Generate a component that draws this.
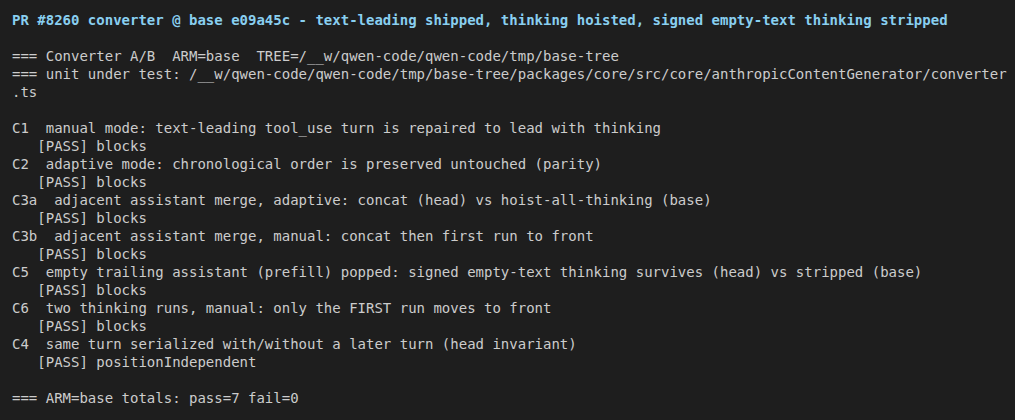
export default function App() {
    const lines = [
        '',
        '=== Converter A/B  ARM=base  TREE=/__w/qwen-code/qwen-code/tmp/base-tree',
        '=== unit under test: /__w/qwen-code/qwen-code/tmp/base-tree/packages/core/src/core/anthropicContentGenerator/converter',
        '.ts',
        '',
        'C1  manual mode: text-leading tool_use turn is repaired to lead with thinking',
        '   [PASS] blocks',
        'C2  adaptive mode: chronological order is preserved untouched (parity)',
        '   [PASS] blocks',
        'C3a  adjacent assistant merge, adaptive: concat (head) vs hoist-all-thinking (base)',
        '   [PASS] blocks',
        'C3b  adjacent assistant merge, manual: concat then first run to front',
        '   [PASS] blocks',
        'C5  empty trailing assistant (prefill) popped: signed empty-text thinking survives (head) vs stripped (base)',
        '   [PASS] blocks',
        'C6  two thinking runs, manual: only the FIRST run moves to front',
        '   [PASS] blocks',
        'C4  same turn serialized with/without a later turn (head invariant)',
        '   [PASS] positionIndependent',
        '',
        '=== ARM=base totals: pass=7 fail=0',
    ]

    return (
        <div className="w-[1015px] h-[420px] bg-[#1e1e1e] overflow-hidden pt-[11px] px-[12px] font-['DejaVu_Sans_Mono',monospace] text-[14px] leading-[18px] text-[#cccccc]">
            <div className="font-bold text-[#89cff0] whitespace-pre">
                PR #8260 converter @ base e09a45c - text-leading shipped, thinking hoisted, signed empty-text thinking stripped
            </div>
            {lines.map((l, i) => (
                <div key={i} className="whitespace-pre h-[18px]">{l}</div>
            ))}
        </div>
    )
}
